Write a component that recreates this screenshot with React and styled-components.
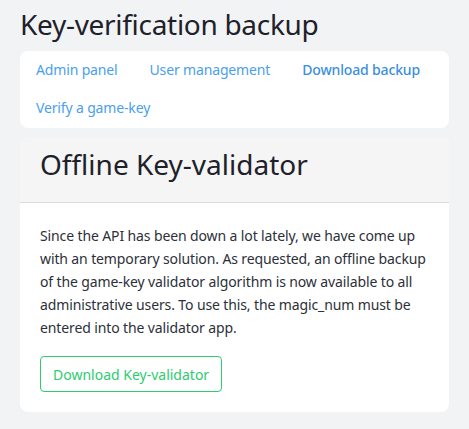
import React from "react";
import styled, { createGlobalStyle } from "styled-components";

const GlobalStyle = createGlobalStyle`
  body {
    margin: 0;
    background: #f2f3f5;
    font-family: "Noto Sans", "Lato", sans-serif;
    color: #222831;
  }
`;

const Page = styled.div`
  padding: 0 20px 17px;
`;

const Title = styled.h1`
  margin: 0;
  padding-top: 7px;
  font-size: 28px;
  font-weight: 400;
  line-height: 34px;
  letter-spacing: -0.3px;
  color: #1e2129;
`;

const NavCard = styled.nav`
  margin-top: 10px;
  background: #fff;
  border-radius: 8px;
  display: flex;
  flex-wrap: wrap;
  padding: 0 0 1px;
`;

const NavLink = styled.a`
  display: block;
  padding: 8px 16px;
  line-height: 22px;
  font-size: 14px;
  letter-spacing: -0.15px;
  color: ${props => (props.active ? "#3b8fdf" : "#4aa0ec")};
  font-weight: ${props => (props.active ? 500 : 400)};
  text-decoration: none;
  cursor: pointer;
`;

const Card = styled.section`
  margin-top: 9px;
  background: #fff;
  border-radius: 8px;
  overflow: hidden;
`;

const CardHeader = styled.div`
  padding: 8px 20px 19px;
  background: #f5f5f6;
  border-bottom: 1px solid #dcdcdc;
`;

const CardTitle = styled.h2`
  margin: 0;
  font-size: 28px;
  line-height: 38px;
  font-weight: 400;
  color: #1e2129;
`;

const CardBody = styled.div`
  padding: 21px 20px 20px;
`;

const Text = styled.p`
  margin: 0;
  font-size: 14px;
  line-height: 23px;
  letter-spacing: -0.12px;
  color: #2d3039;
`;

const OutlineButton = styled.button`
  margin-top: 17px;
  height: 36px;
  padding: 0 12px;
  border: 1px solid #2ecc71;
  border-radius: 4px;
  background: transparent;
  color: #2ecc71;
  font-family: inherit;
  font-size: 14px;
  cursor: pointer;
`;

const links = [
  { label: "Admin panel" },
  { label: "User management" },
  { label: "Download backup", active: true },
  { label: "Verify a game-key" }
];

export default function App() {
  return (
    <Page>
      <GlobalStyle />
      <Title>Key-verification backup</Title>
      <NavCard>
        {links.map(link => (
          <NavLink key={link.label} active={link.active}>
            {link.label}
          </NavLink>
        ))}
      </NavCard>
      <Card>
        <CardHeader>
          <CardTitle>Offline Key-validator</CardTitle>
        </CardHeader>
        <CardBody>
          <Text>
            Since the API has been down a lot lately, we have come up with an
            temporary solution. As requested, an offline backup of the game-key
            validator algorithm is now available to all administrative users. To
            use this, the magic_num must be entered into the validator app.
          </Text>
          <OutlineButton>Download Key-validator</OutlineButton>
        </CardBody>
      </Card>
    </Page>
  );
}
